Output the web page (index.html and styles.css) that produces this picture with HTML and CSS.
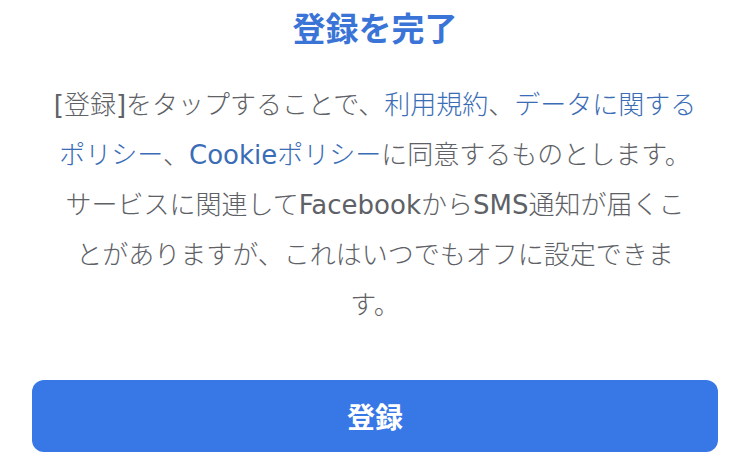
FILE: index.html
```html
<!DOCTYPE html>
<html lang="ja">
<head>
<meta charset="utf-8">
<title>登録を完了</title>
<link rel="stylesheet" href="styles.css">
</head>
<body>
<main class="screen">
  <h1 class="title">登録を完了</h1>
  <p class="terms"><span class="latin">[</span>登録<span class="latin">]</span>をタップすることで、<a class="link" href="#">利用規約</a>、<a class="link" href="#">データに関する<br>ポリシー</a>、<a class="link" href="#"><span class="latin">Cookie</span>ポリシー</a>に同意するものとします。<br>サービスに関連して<span class="latin">Facebook</span>から<span class="latin">SMS</span>通知が届くこ<br>とがありますが、これはいつでもオフに設定できま<br>す。</p>
  <button class="primary" type="button">登録</button>
</main>
</body>
</html>
```
FILE: styles.css
```css
html, body {
  margin: 0;
  padding: 0;
  background: #ffffff;
}

.screen {
  display: flex;
  flex-direction: column;
  padding: 7px 32px 0;
  font-family: "DejaVu Sans", "Noto Sans CJK JP", sans-serif;
}

.title {
  margin: 0;
  font-family: "Noto Sans CJK JP", sans-serif;
  font-size: 33px;
  line-height: 40px;
  font-weight: 700;
  color: #3a74d6;
  text-align: center;
}

.terms {
  margin: 33px -20px 0;
  font-size: 26px;
  line-height: 50px;
  font-weight: 300;
  color: #5e6166;
  text-align: center;
  white-space: nowrap;
}

.latin {
  font-weight: 400;
}

.link {
  color: #3b6db6;
  text-decoration: none;
}

.primary {
  margin-top: 50px;
  height: 72px;
  width: 100%;
  border: none;
  border-radius: 12px;
  background: #3877e6;
  color: #ffffff;
  font-family: "Noto Sans CJK JP", sans-serif;
  font-size: 28px;
  font-weight: 700;
  padding: 0;
}
```
